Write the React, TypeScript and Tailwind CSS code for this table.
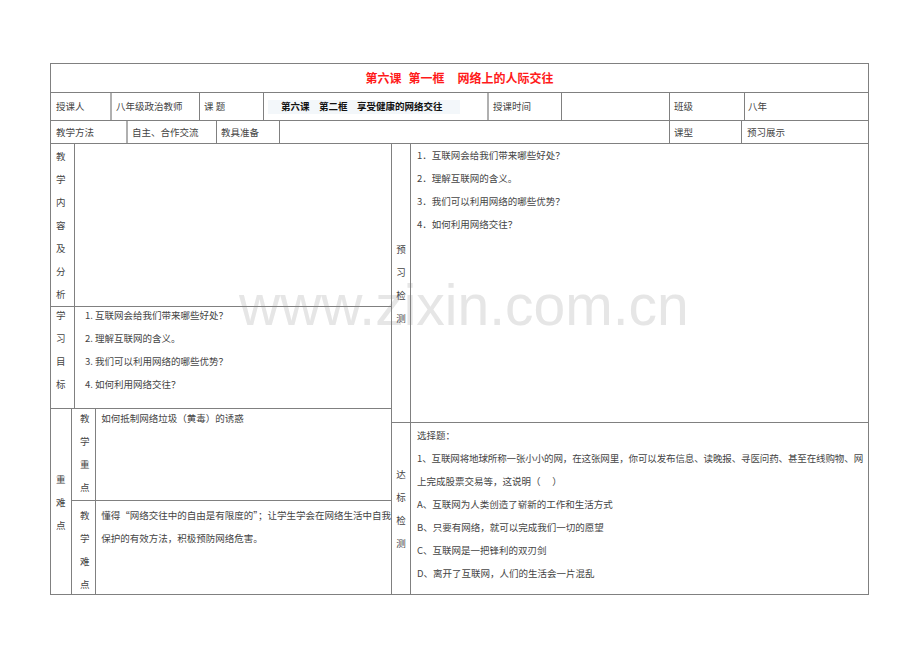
import React from "react";

const line = "border-[#808080]";

function VLabel({ text }: { text: string }) {
  return (
    <div className="flex flex-col gap-[7px]">
      {[...text].map((c, i) => (
        <span key={i} className="leading-[16px]">
          {c}
        </span>
      ))}
    </div>
  );
}

function Lines({ items, tight }: { items: string[]; tight?: number }) {
  return (
    <div className="flex flex-col gap-[7px] whitespace-nowrap">
      {items.map((t, i) => (
        <span key={i} className={`leading-[16px] ${i === tight ? "tracking-[-0.12px]" : ""}`}>
          {t}
        </span>
      ))}
    </div>
  );
}

function Cell({ w, children, className = "" }: { w?: string; children?: React.ReactNode; className?: string }) {
  return (
    <div className={`${w ?? "flex-1"} flex items-center border-r ${line} pl-[4px] whitespace-nowrap ${className}`}>
      {children}
    </div>
  );
}

export default function App() {
  return (
    <div className="relative w-[920px] h-[650px] bg-white pt-[63px] pl-[50px] text-[9.5px] text-[#444] font-['Noto_Sans_CJK_SC',sans-serif]">
      <div className="absolute left-[239px] top-[277px] text-[57px] leading-none text-[#e6e6e6] font-['Liberation_Sans',Arial,sans-serif] select-none">
        www.zixin.com.cn
      </div>

      <div className={`relative w-[819px] h-[532px] border ${line} flex flex-col`}>
        {/* title */}
        <div className={`h-[29px] border-b ${line} flex items-center justify-center`}>
          <span className="text-[12px] font-bold text-[#ff1a1a] whitespace-nowrap">
            第六课<span className="ml-[7px]">第一框</span>
            <span className="ml-[13px]">网络上的人际交往</span>
          </span>
        </div>

        {/* row 2 */}
        <div className={`h-[28px] border-b ${line} flex`}>
          <Cell w="w-[61px]" className="pl-[5px] border-r-2 border-r-[#b0b0b0]">授课人</Cell>
          <Cell w="w-[88px]">八年级政治教师</Cell>
          <Cell w="w-[64px]">课 题</Cell>
          <Cell w="w-[225px]" className="border-r-2 border-r-[#b0b0b0]">
            <span className="h-[14px] flex items-center bg-[#f3f7fa] pl-[13px] pr-[17px] font-bold text-[#111]">
              第六课　第二框　享受健康的网络交往
            </span>
          </Cell>
          <Cell w="w-[73px]">授课时间</Cell>
          <Cell w="w-[108px]" />
          <Cell w="w-[75px]">班级</Cell>
          <div className="flex-1 flex items-center pl-[3px]">八年</div>
        </div>

        {/* row 3 */}
        <div className={`h-[23px] border-b ${line} flex`}>
          <Cell w="w-[77px]" className="pl-[5px] border-r-2 border-r-[#b0b0b0]">教学方法</Cell>
          <Cell w="w-[89px]">自主、合作交流</Cell>
          <Cell w="w-[63px]">教具准备</Cell>
          <Cell w="w-[390px]" />
          <Cell w="w-[72px]">课型</Cell>
          <div className="flex-1 flex items-center pl-[5px]">预习展示</div>
        </div>

        {/* main */}
        <div className="flex-1 flex">
          <div className={`w-[341px] border-r ${line} flex flex-col`}>
            <div className={`h-[163px] border-b ${line} flex`}>
              <div className={`w-[24px] border-r ${line} pl-[5px] pt-[4px]`}>
                <VLabel text="教学内容及分析" />
              </div>
              <div className="flex-1" />
            </div>
            <div className={`h-[102px] border-b ${line} flex`}>
              <div className={`w-[24px] border-r ${line} pl-[5px]`}>
                <VLabel text="学习目标" />
              </div>
              <div className="flex-1 pl-[10px]">
                <Lines
                  items={[
                    "1. 互联网会给我们带来哪些好处？",
                    "2. 理解互联网的含义。",
                    "3. 我们可以利用网络的哪些优势？",
                    "4. 如何利用网络交往？",
                  ]}
                />
              </div>
            </div>
            <div className="flex-1 flex">
              <div className={`w-[24px] border-r ${line} pl-[5px] flex items-center`}>
                <VLabel text="重难点" />
              </div>
              <div className="flex-1 flex flex-col">
                <div className={`h-[92px] border-b ${line} flex`}>
                  <div className={`w-[24px] border-r ${line} flex justify-center pt-[1px] pl-[2px]`}>
                    <VLabel text="教学重点" />
                  </div>
                  <div className="flex-1 pl-[5px] pt-[1px]">
                    <Lines items={["如何抵制网络垃圾（黄毒）的诱惑"]} />
                  </div>
                </div>
                <div className="flex-1 flex">
                  <div className={`w-[24px] border-r ${line} flex justify-center pt-[6px] pl-[2px]`}>
                    <VLabel text="教学难点" />
                  </div>
                  <div className="flex-1 pl-[5px] pt-[6px]">
                    <Lines
                      items={[
                        "懂得“网络交往中的自由是有限度的”；让学生学会在网络生活中自我",
                        "保护的有效方法，积极预防网络危害。",
                      ]}
                    />
                  </div>
                </div>
              </div>
            </div>
          </div>

          <div className="flex-1 flex flex-col">
            <div className={`h-[279px] border-b ${line} flex`}>
              <div className={`w-[19px] border-r ${line} flex items-center justify-center`}>
                <VLabel text="预习检测" />
              </div>
              <div className="flex-1 pl-[6px] pt-[3px]">
                <Lines
                  items={[
                    "1．互联网会给我们带来哪些好处？",
                    "2．理解互联网的含义。",
                    "3．我们可以利用网络的哪些优势？",
                    "4．如何利用网络交往？",
                  ]}
                />
              </div>
            </div>
            <div className="flex-1 flex">
              <div className={`w-[19px] border-r ${line} flex items-center justify-center`}>
                <VLabel text="达标检测" />
              </div>
              <div className="flex-1 pl-[6px] pt-[4px]">
                <Lines
                  tight={1}
                  items={[
                    "选择题：",
                    "1、互联网将地球所称一张小小的网，在这张网里，你可以发布信息、读晚报、寻医问药、甚至在线购物、网",
                    "上完成股票交易等，这说明（　 ）",
                    "A、互联网为人类创造了崭新的工作和生活方式",
                    "B、只要有网络，就可以完成我们一切的愿望",
                    "C、互联网是一把锋利的双刃剑",
                    "D、离开了互联网，人们的生活会一片混乱",
                  ]}
                />
              </div>
            </div>
          </div>
        </div>
      </div>
    </div>
  );
}
